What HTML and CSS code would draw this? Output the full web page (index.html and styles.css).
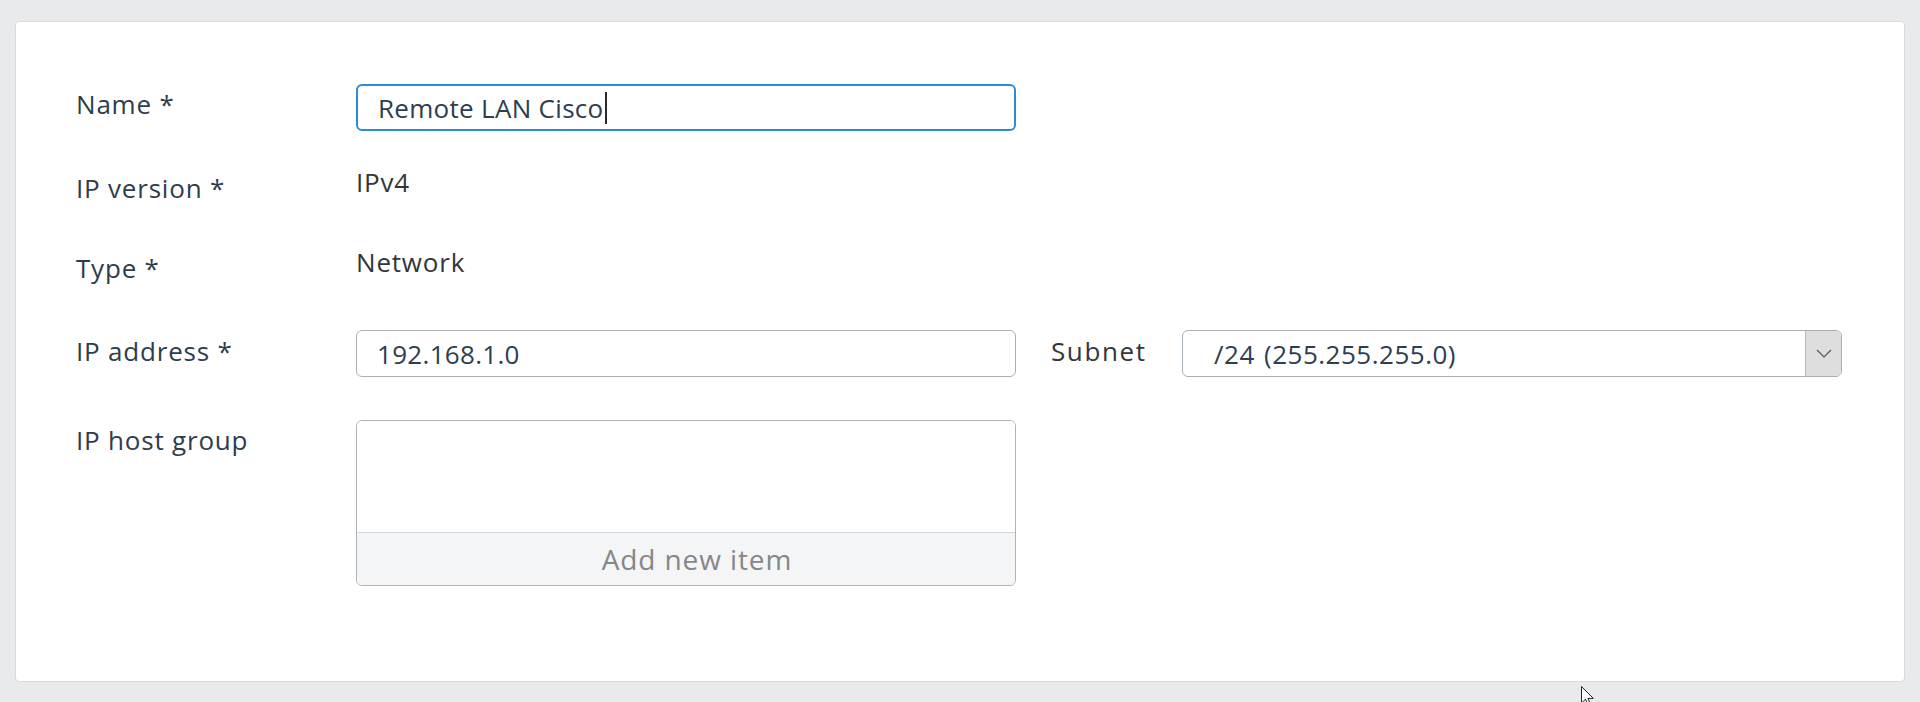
FILE: index.html
```html
<!DOCTYPE html>
<html lang="en">
<head>
<meta charset="utf-8">
<title>IP host</title>
<link rel="stylesheet" href="styles.css">
</head>
<body>
<div class="card">
  <div class="row row-first">
    <div class="label label-first">Name *</div>
    <div class="field input focused">Remote LAN Cisco<span class="caret"></span></div>
  </div>
  <div class="row row-static">
    <div class="label">IP version *</div>
    <div class="value">IPv4</div>
  </div>
  <div class="row row-static">
    <div class="label">Type *</div>
    <div class="value">Network</div>
  </div>
  <div class="row row-control">
    <div class="label label-pad">IP address *</div>
    <div class="pair">
      <div class="field input">192.168.1.0</div>
      <div class="label label-pad sublabel">Subnet</div>
      <div class="field select">
        <span class="select-text">/24 (255.255.255.0)</span>
        <span class="select-btn">
          <svg width="16" height="9" viewBox="0 0 16 9"><polyline points="1,1 8,8 15,1" fill="none" stroke="#555" stroke-width="1.2"/></svg>
        </span>
      </div>
    </div>
  </div>
  <div class="row row-control row-last">
    <div class="label label-pad-sm">IP host group</div>
    <div class="listbox">
      <div class="list-area"></div>
      <div class="list-add">Add new item</div>
    </div>
  </div>
</div>
<svg class="pointer" width="14" height="22" viewBox="0 0 14 22"><path d="M0.5 0.5 L0.5 17 L4.5 13.2 L7.3 19.6 L9.6 18.6 L6.9 12.4 L12.3 12.4 Z" fill="#fff" stroke="#222" stroke-width="1"/></svg>
</body>
</html>
```
FILE: styles.css
```css
html, body {
  margin: 0;
  height: 100%;
}

body {
  box-sizing: border-box;
  padding: 21px 15px 20px;
  background: #e9eaec;
  font-family: "Open Sans", "Liberation Sans", sans-serif;
  font-size: 26px;
  line-height: 36px;
  color: #2e3d4c;
}

.card {
  box-sizing: border-box;
  height: 100%;
  background: #fff;
  border: 1px solid #d9dadd;
  border-radius: 4px;
  padding: 62px 0 0 60px;
}

.row {
  display: grid;
  grid-template-columns: 280px auto;
  align-items: start;
}

.row-static {
  margin-top: 44px;
}

.row-first + .row-static {
  margin-top: 39px;
}

.row-control {
  margin-top: 44px;
}

.row-last {
  margin-top: 43px;
}

.label {
  color: #2e3d4c;
  white-space: nowrap;
  letter-spacing: 0.8px;
}

.label-first {
  padding-top: 2px;
}

.label-pad {
  padding-top: 3px;
}

.label-pad-sm {
  padding-top: 2px;
}

.value {
  margin-top: -6px;
  color: #333638;
  letter-spacing: 0.8px;
}

.field {
  box-sizing: border-box;
  width: 660px;
  height: 47px;
  border: 1px solid #a9afb6;
  border-radius: 6px;
  background: #fff;
  display: flex;
  align-items: center;
  color: #2c3e50;
}

.input {
  padding-left: 20px;
  letter-spacing: 0.3px;
}

.input.focused {
  border: 2px solid #2b8bd5;
}

.caret {
  display: inline-block;
  width: 2px;
  height: 32px;
  margin-left: 1px;
  background: #2a2a2a;
}

.pair {
  display: flex;
  align-items: flex-start;
}

.sublabel {
  width: 131px;
  margin-left: 35px;
  color: #333638;
  letter-spacing: 1.6px;
}

.select {
  padding-left: 31px;
  overflow: hidden;
}

.select-text {
  flex: 1;
  word-spacing: 2px;
  letter-spacing: 0.5px;
}

.select-btn {
  width: 35px;
  align-self: stretch;
  background: #dedede;
  border-left: 1px solid #b8bcc1;
  display: flex;
  align-items: center;
  justify-content: center;
}

.listbox {
  box-sizing: border-box;
  width: 660px;
  height: 166px;
  border: 1px solid #aeb3b9;
  border-radius: 6px;
  overflow: hidden;
  display: flex;
  flex-direction: column;
}

.list-area {
  flex: 1;
  background: #fff;
}

.list-add {
  height: 52px;
  border-top: 1px solid #d3d6da;
  background: #f4f5f7;
  color: #868788;
  font-size: 28px;
  letter-spacing: 0.9px;
  display: flex;
  align-items: center;
  justify-content: center;
  padding-left: 22px;
}

.pointer {
  position: absolute;
  left: 1581px;
  top: 686px;
}
```
